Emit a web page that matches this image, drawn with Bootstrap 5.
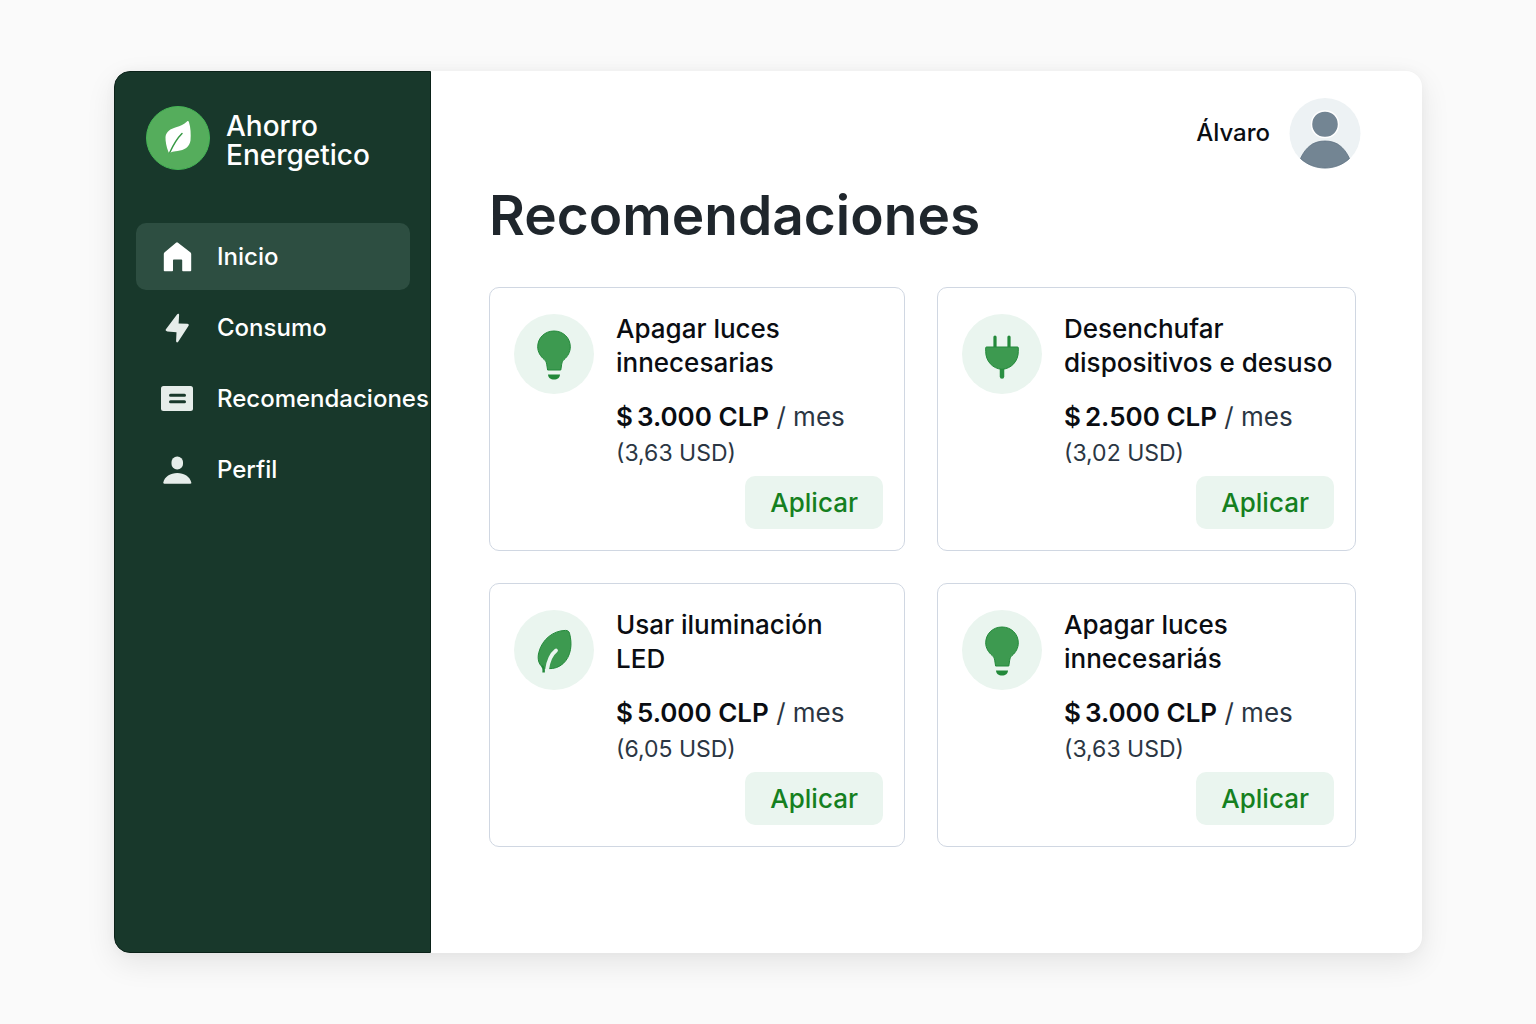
<!DOCTYPE html>
<html lang="es">
<head>
<meta charset="utf-8">
<meta name="viewport" content="width=device-width, initial-scale=1">
<title>Ahorro Energetico – Recomendaciones</title>
<link href="https://cdn.jsdelivr.net/npm/bootstrap@5.3.0/dist/css/bootstrap.min.css" rel="stylesheet">
<style>
  body { font-family: Inter, "Liberation Sans", sans-serif; background: #fafafa; color: #0a0d12; }
  .page-wrap { padding: 71px 114px; min-height: 100vh; }
  .app-panel { background: #fff; border-radius: 16px; box-shadow: 0 10px 30px rgba(0,0,0,.09), 0 0 12px rgba(0,0,0,.03); }
  .side { flex: 0 0 317px; min-width: 0; background: #18382b; border: 1px solid #0b2219; border-radius: 16px 0 0 16px; padding: 34px 20px 32px 21px; }
  .brand-link { gap: 16px; padding-left: 10px; margin-bottom: 53px; color: #fff; font-size: 28px; line-height: 29px; font-weight: 500; }
  .brand-link svg { width: 64px; height: 64px; flex: none; }
  .brand-name { padding-top: 6px; }
  .side .nav { gap: 4px; }
  .side .nav-link { height: 67px; padding: 0 25px; gap: 24px; border-radius: 10px; color: #fff; font-size: 24px; font-weight: 500; white-space: nowrap; }
  .side .nav-link svg { width: 32px; height: 32px; flex: none; fill: #e6edea; }
  .side .nav-link.active { background: #2d4e41; }
  .side .nav-link.active svg { fill: #fff; }
  .content { padding: 26px 66px 64px 58px; }
  .user-bar { gap: 19px; margin-right: -5px; font-size: 24px; font-weight: 500; }
  .user-bar svg { width: 72px; height: 72px; }
  .page-title { font-size: 55px; line-height: 64px; font-weight: 600; margin: 14px 0 40px; color: #1f262c; }
  .tips { display: grid; grid-template-columns: 1fr minmax(419px, 1fr); gap: 32px; }
  .tip { gap: 22px; padding: 24px 21px 21px 24px; border: 1px solid #d0d7e2; border-radius: 10px; }
  .tip-icon { width: 80px; height: 80px; flex: none; margin-top: 2px; }
  .tip-title { font-size: 26px; line-height: 34px; font-weight: 500; margin: 0 0 19px; white-space: nowrap; }
  .tip-price { font-size: 26px; line-height: 36px; color: #2b3643; white-space: nowrap; }
  .tip-price strong { font-weight: 600; color: #0a0d12; }
  .coin { margin-right: 4px; }
  .tip-usd { font-size: 23px; line-height: 36px; color: #2b3643; }
  .btn-apply { --bs-btn-color: #15801f; --bs-btn-bg: #eaf5ef; --bs-btn-hover-color: #15801f; --bs-btn-hover-bg: #dcefe4; --bs-btn-active-color: #15801f; --bs-btn-active-bg: #cfe8d9;
    --bs-btn-border-width: 0; --bs-btn-border-radius: 10px; --bs-btn-font-size: 26px; --bs-btn-font-weight: 500; --bs-btn-line-height: 53px; --bs-btn-padding-y: 0; --bs-btn-padding-x: 25px; margin-top: 5px; }
</style>
<script src="https://cdn.jsdelivr.net/npm/bootstrap@5.3.0/dist/js/bootstrap.bundle.min.js" defer></script>
</head>
<body>
<svg class="d-none" aria-hidden="true">
  <symbol id="bulb" viewBox="0 0 80 80">
    <circle cx="40" cy="40" r="40" fill="#eaf5ef"/>
    <path fill="#3d9a50" stroke="#23893a" d="M40 17c9.300 0 16.300 7 16.300 15.800 0 5.400-2.600 9.600-6.300 12.800-1.400 1.300-2 2.700-2.300 4.600l-.9 5.800H33.600l-.9-5.800c-.3-1.900-1-3.300-2.400-4.600-3.700-3.200-6.600-7.400-6.600-12.800C23.700 24 30.700 17 40 17z"/>
    <path fill="#23893a" d="M34 60.500h12c0 3-2.600 5-6 5s-6-2-6-5z"/>
  </symbol>
  <symbol id="plug" viewBox="0 0 80 80">
    <circle cx="40" cy="40" r="40" fill="#eaf5ef"/>
    <path fill="none" stroke="#23893a" stroke-width="3.200" stroke-linecap="round" d="M33 23v12M47 23v12"/>
    <path fill="none" stroke="#2a8f42" stroke-width="4.500" stroke-linecap="round" d="M40 54v8.500"/>
    <path fill="#3d9a50" stroke="#23893a" d="M24.500 33h31c.6 0 .8.400.8.900v3.600c0 9.500-6.800 17.200-16.300 17.800-9.500-.6-16.300-8.300-16.300-17.800v-3.600c0-.5.200-.9.800-.9z"/>
  </symbol>
  <symbol id="leaf" viewBox="0 0 80 80">
    <circle cx="40" cy="40" r="40" fill="#eaf5ef"/>
    <path fill="#3d9a50" stroke="#23893a" d="M51.500 20.400c2.200 0 3.500 1 4 2.800 1.400 5.200 2 10.800 1 16.300C54.500 51 46 59.500 34 58.600h-3.500C25 55.500 23 49.500 24.800 42.500 28 29.500 39 20.600 51.500 20.400z"/>
    <path fill="none" stroke="#eaf5ef" stroke-width="3.800" stroke-linecap="round" d="M42 40.500C37 44.500 34.200 51 33 60"/>
    <path fill="none" stroke="#23893a" stroke-width="2.500" d="M28 56c1.500 1 2 2 1.600 6.500"/>
  </symbol>
</svg>

<div class="page-wrap d-flex">
  <div class="app-panel d-flex flex-grow-1">
    <aside class="side">
      <a class="brand-link d-flex align-items-center text-decoration-none" href="#">
        <svg viewBox="0 0 64 64" aria-hidden="true">
          <circle cx="32" cy="32" r="31.500" fill="#55ad5c" stroke="#45b455"/>
          <path fill="#fff" d="M41 15.400c.9-.6 1.700-.3 2 .8 1.700 5.500 2 12 1.500 18.300-1 6.500-6 9.700-13 10.500-2.600.2-4.600.5-6.300 1.300-1.600 1-2.500.8-3-1C20.600 41 19.300 35.500 19.500 31c.6-5.500 5-8.200 10.500-9.800 4.500-1.400 7.800-3 11-5.800z"/>
          <path fill="none" stroke="#379944" stroke-width="1.500" stroke-linecap="round" d="M36 27.500C30 33.500 27 39.500 23.800 46.500"/>
        </svg>
        <span class="brand-name">Ahorro<br>Energetico</span>
      </a>
      <nav class="nav flex-column flex-nowrap" aria-label="Principal">
        <a class="nav-link active d-flex align-items-center" href="#" aria-current="page">
          <svg viewBox="0 0 32 32" aria-hidden="true"><path d="M15 1.700a1.500 1.500 0 0 1 2 0L29.600 11.600c.4.400.6.800.6 1.400v16.500c0 .5-.3.800-.8.800H22c-.5 0-.8-.3-.8-.8V19.200c0-.5-.3-.8-.8-.8h-7.600c-.5 0-.8.300-.8.800v10.300c0 .5-.3.800-.8.800H3.600c-.5 0-.8-.3-.8-.8V13c0-.6.2-1 .6-1.400z"/></svg>
          Inicio
        </a>
        <a class="nav-link d-flex align-items-center" href="#">
          <svg viewBox="0 0 32 32" aria-hidden="true"><path d="M16 2.500c1-1.100 2.200-.7 2.100.7l-.5 8.300 8.600.3c1.500.1 2.100 1.100 1.200 2.300L17.200 29.800c-.9 1.100-2.100.7-2.100-.7l.4-8.900-9.100-.7c-1.700-.2-2.300-1.200-1.300-2.400z"/></svg>
          Consumo
        </a>
        <a class="nav-link d-flex align-items-center" href="#">
          <svg viewBox="0 0 32 32" aria-hidden="true"><rect y="3" width="32" height="25" rx="2.500"/><path d="M9.500 12.200h14M9.500 18.800h14" stroke="#18382b" stroke-width="3" stroke-linecap="round"/></svg>
          Recomendaciones
        </a>
        <a class="nav-link d-flex align-items-center" href="#">
          <svg viewBox="0 0 32 32" aria-hidden="true"><rect x="10.500" y="2.500" width="11.500" height="13" rx="5.600"/><path d="M2.300 28.500c1.200-6 7.200-9.600 14-9.600s12.800 3.600 14 9.600c.2.800-.2 1.200-1 1.200h-26c-.8 0-1.200-.4-1-1.200z"/></svg>
          Perfil
        </a>
      </nav>
    </aside>
    <main class="content flex-grow-1">
      <div class="user-bar d-flex align-items-center justify-content-end">
        <span>Álvaro</span>
        <svg viewBox="0 0 72 72" role="img" aria-label="Avatar de Álvaro">
          <circle cx="36" cy="36.500" r="35.500" fill="#edf2f4"/>
          <rect x="22.500" y="14" width="27" height="26.500" rx="13" fill="#738593" stroke="#fff" stroke-width="1.500"/>
          <path fill="#738593" stroke="#5d7080" stroke-width=".8" d="M11.500 61.500C17 49.500 25 44 36 44S55 49.500 60.500 61.500C54 67.500 45.500 71 36 71S18 67.500 11.500 61.500z"/>
        </svg>
      </div>
      <h1 class="page-title">Recomendaciones</h1>
      <div class="tips">
        <article class="tip d-flex">
          <svg class="tip-icon" aria-hidden="true"><use href="#bulb"/></svg>
          <div class="flex-grow-1 d-flex flex-column">
            <h2 class="tip-title">Apagar luces<br>innecesarias</h2>
            <div class="tip-price"><strong><span class="coin">$</span>3.000 CLP</strong> / mes</div>
            <div class="tip-usd">(3,63 USD)</div>
            <button type="button" class="btn btn-apply align-self-end">Aplicar</button>
          </div>
        </article>
        <article class="tip d-flex">
          <svg class="tip-icon" aria-hidden="true"><use href="#plug"/></svg>
          <div class="flex-grow-1 d-flex flex-column">
            <h2 class="tip-title">Desenchufar<br>dispositivos e desuso</h2>
            <div class="tip-price"><strong><span class="coin">$</span>2.500 CLP</strong> / mes</div>
            <div class="tip-usd">(3,02 USD)</div>
            <button type="button" class="btn btn-apply align-self-end">Aplicar</button>
          </div>
        </article>
        <article class="tip d-flex">
          <svg class="tip-icon" aria-hidden="true"><use href="#leaf"/></svg>
          <div class="flex-grow-1 d-flex flex-column">
            <h2 class="tip-title">Usar iluminación<br>LED</h2>
            <div class="tip-price"><strong><span class="coin">$</span>5.000 CLP</strong> / mes</div>
            <div class="tip-usd">(6,05 USD)</div>
            <button type="button" class="btn btn-apply align-self-end">Aplicar</button>
          </div>
        </article>
        <article class="tip d-flex">
          <svg class="tip-icon" aria-hidden="true"><use href="#bulb"/></svg>
          <div class="flex-grow-1 d-flex flex-column">
            <h2 class="tip-title">Apagar luces<br>innecesariás</h2>
            <div class="tip-price"><strong><span class="coin">$</span>3.000 CLP</strong> / mes</div>
            <div class="tip-usd">(3,63 USD)</div>
            <button type="button" class="btn btn-apply align-self-end">Aplicar</button>
          </div>
        </article>
      </div>
    </main>
  </div>
</div>
</body>
</html>
